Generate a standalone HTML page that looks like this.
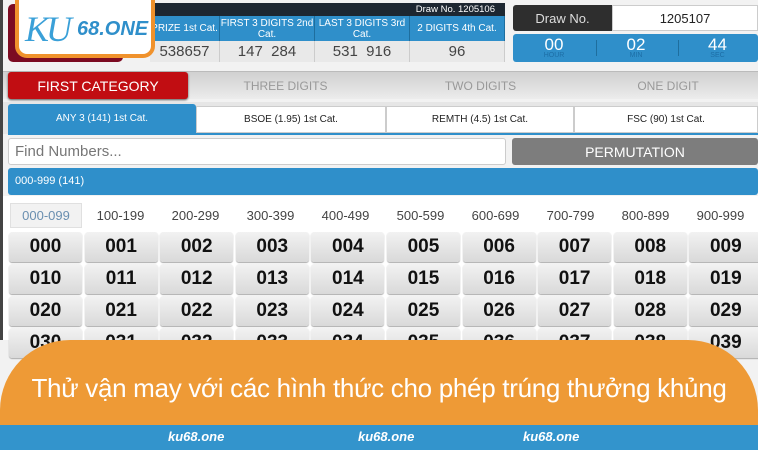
<!DOCTYPE html>
<html><head><meta charset="utf-8"><style>
*{margin:0;padding:0;box-sizing:border-box}
body{width:758px;height:450px;overflow:hidden;background:#f2f2f2;font-family:"Liberation Sans",sans-serif;position:relative}
.a{position:absolute}
.c{display:flex;align-items:center;justify-content:center;text-align:center}
.th{background:#2f8fca;color:#fff;font-size:10px;line-height:11px;border-right:1px solid #1e6e9e}
.td{background:#e9e9e9;color:#444;font-size:15px;border-right:1px solid #ccc}
.num{background:linear-gradient(#f2f2f2,#d9d9d9);border-radius:3px;color:#111;font-size:19px;font-weight:bold;box-shadow:0 1px 1px #aaa}
.rg{font-size:13px;color:#444}
.st{background:#fff;color:#222;font-size:10px;border:1px solid #ccc}
</style></head><body>
<div class="a" style="left:0;top:0;width:3px;height:340px;background:#444"></div>
<div class="a" style="left:8px;top:4px;width:115px;height:58px;background:#7c0b22;border-radius:5px"></div>
<div class="a" style="left:150px;top:3px;width:355px;height:13px;background:#1d2731;color:#fff;font-size:9.5px;text-align:right;padding-right:10px;line-height:13px">Draw No. 1205106</div>
<div class="a th c" style="left:150px;top:16px;width:70px;height:25px">PRIZE 1st Cat.</div>
<div class="a th c" style="left:220px;top:16px;width:95px;height:25px">FIRST 3 DIGITS 2nd<br>Cat.</div>
<div class="a th c" style="left:315px;top:16px;width:95px;height:25px">LAST 3 DIGITS 3rd<br>Cat.</div>
<div class="a th c" style="left:410px;top:16px;width:95px;height:25px">2 DIGITS 4th Cat.</div>
<div class="a td c" style="left:150px;top:41px;width:70px;height:21px">538657</div>
<div class="a td c" style="left:220px;top:41px;width:95px;height:21px">147&nbsp;&nbsp;284</div>
<div class="a td c" style="left:315px;top:41px;width:95px;height:21px">531&nbsp;&nbsp;916</div>
<div class="a td c" style="left:410px;top:41px;width:95px;height:21px">96</div>
<div class="a" style="left:15px;top:-6px;width:140px;height:64px;background:#fff;border:4px solid #f0922c;border-radius:0 0 12px 12px;overflow:hidden">
<div class="a" style="left:6px;top:10px;font-size:36px;font-style:italic;color:#3aa0d8;font-family:'Liberation Serif',serif;letter-spacing:-3px">KU</div>
<div class="a" style="left:58px;top:20px;font-size:20px;font-style:italic;font-weight:bold;color:#2f8fca">68.ONE</div>
</div>
<div class="a c" style="left:513px;top:5px;width:99px;height:26px;background:#2e2e2e;color:#ddd;font-size:13px;border-radius:3px 0 0 3px">Draw No.</div>
<div class="a c" style="left:612px;top:5px;width:146px;height:26px;background:#fff;color:#222;font-size:13px;border:1px solid #ccc">1205107</div>
<div class="a" style="left:513px;top:34px;width:245px;height:28px;background:#2f8fca;border-radius:3px"></div>
<div class="a" style="left:513px;top:35px;width:82px;text-align:center;color:#fff;font-size:17px">00<div style="font-size:7px;color:#1d6ea6;margin-top:-3px">HOUR</div></div>
<div class="a" style="left:595px;top:35px;width:82px;text-align:center;color:#fff;font-size:17px">02<div style="font-size:7px;color:#1d6ea6;margin-top:-3px">MIN</div></div>
<div class="a" style="left:677px;top:35px;width:81px;text-align:center;color:#fff;font-size:17px">44<div style="font-size:7px;color:#1d6ea6;margin-top:-3px">SEC</div></div>
<div class="a" style="left:596px;top:40px;width:1px;height:16px;background:#1e6e9e"></div>
<div class="a" style="left:678px;top:40px;width:1px;height:16px;background:#1e6e9e"></div>
<div class="a" style="left:3px;top:71px;width:755px;height:28px;background:linear-gradient(#d0d0d0,#ececec);border-top:1px solid #bbb"></div>
<div class="a c" style="left:8px;top:72px;width:180px;height:27px;background:#c10d12;color:#fff;font-size:14px;border-radius:3px;box-shadow:0 1px 2px #555">FIRST CATEGORY</div>
<div class="a c" style="left:188px;top:74px;width:195px;height:24px;color:#999;font-size:12px">THREE DIGITS</div>
<div class="a c" style="left:383px;top:74px;width:195px;height:24px;color:#999;font-size:12px">TWO DIGITS</div>
<div class="a c" style="left:578px;top:74px;width:180px;height:24px;color:#999;font-size:12px">ONE DIGIT</div>
<div class="a" style="left:3px;top:102px;width:755px;height:32px;background:#e6e6e6"></div>
<div class="a c" style="left:8px;top:104px;width:188px;height:29px;background:#2f8fca;color:#fff;font-size:10px;border-radius:3px 3px 0 0">ANY 3 (141) 1st Cat.</div>
<div class="a st c" style="left:196px;top:106px;width:190px;height:27px">BSOE (1.95) 1st Cat.</div>
<div class="a st c" style="left:386px;top:106px;width:188px;height:27px">REMTH (4.5) 1st Cat.</div>
<div class="a st c" style="left:574px;top:106px;width:184px;height:27px">FSC (90) 1st Cat.</div>
<div class="a" style="left:8px;top:133px;width:750px;height:2px;background:#2f8fca"></div>
<div class="a" style="left:8px;top:138px;width:498px;height:27px;background:#fff;border:1px solid #ccc;border-radius:3px;color:#777;font-size:15px;padding:4px 6px">Find Numbers...</div>
<div class="a c" style="left:512px;top:138px;width:246px;height:27px;background:#7d7d7d;color:#fff;font-size:14px;border-radius:3px">PERMUTATION</div>
<div class="a" style="left:8px;top:168px;width:750px;height:27px;background:#2f8fca;color:#fff;font-size:11px;padding:7px 7px;border-radius:3px">000-999 (141)</div>
<div class="a" style="left:3px;top:196px;width:755px;height:144px;background:#fff"></div>
<div class="a c rg" style="left:10px;top:203px;width:72px;height:25px;background:#f2f2f2;border:1px solid #e0e0e0;color:#6a8fb0">000-099</div>
<div class="a c rg" style="left:83px;top:203px;width:75px;height:25px">100-199</div>
<div class="a c rg" style="left:158px;top:203px;width:75px;height:25px">200-299</div>
<div class="a c rg" style="left:233px;top:203px;width:75px;height:25px">300-399</div>
<div class="a c rg" style="left:308px;top:203px;width:75px;height:25px">400-499</div>
<div class="a c rg" style="left:383px;top:203px;width:75px;height:25px">500-599</div>
<div class="a c rg" style="left:458px;top:203px;width:75px;height:25px">600-699</div>
<div class="a c rg" style="left:533px;top:203px;width:75px;height:25px">700-799</div>
<div class="a c rg" style="left:608px;top:203px;width:75px;height:25px">800-899</div>
<div class="a c rg" style="left:683px;top:203px;width:75px;height:25px">900-999</div>
<div class="a" style="left:9px;top:232px;width:749px;display:grid;grid-template-columns:repeat(10,73px);column-gap:2.6px;row-gap:2px;grid-auto-rows:30px">
<div class="num c">000</div><div class="num c">001</div><div class="num c">002</div><div class="num c">003</div><div class="num c">004</div><div class="num c">005</div><div class="num c">006</div><div class="num c">007</div><div class="num c">008</div><div class="num c">009</div>
<div class="num c">010</div><div class="num c">011</div><div class="num c">012</div><div class="num c">013</div><div class="num c">014</div><div class="num c">015</div><div class="num c">016</div><div class="num c">017</div><div class="num c">018</div><div class="num c">019</div>
<div class="num c">020</div><div class="num c">021</div><div class="num c">022</div><div class="num c">023</div><div class="num c">024</div><div class="num c">025</div><div class="num c">026</div><div class="num c">027</div><div class="num c">028</div><div class="num c">029</div>
<div class="num c">030</div><div class="num c">031</div><div class="num c">032</div><div class="num c">033</div><div class="num c">034</div><div class="num c">035</div><div class="num c">036</div><div class="num c">037</div><div class="num c">038</div><div class="num c">039</div>
</div>
<div class="a c" style="left:0;top:340px;width:758px;height:90px;background:#ee9a36;border-radius:70px 70px 0 0;color:#fff;font-size:26px;padding-top:6px;letter-spacing:-0.3px">Thử vận may với các hình thức cho phép trúng thưởng khủng</div>
<div class="a" style="left:0;top:425px;width:758px;height:25px;background:#3394cc"></div>
<div class="a" style="left:168px;top:429px;color:#fff;font-size:13px;font-weight:bold;font-style:italic">ku68.one</div>
<div class="a" style="left:358px;top:429px;color:#fff;font-size:13px;font-weight:bold;font-style:italic">ku68.one</div>
<div class="a" style="left:523px;top:429px;color:#fff;font-size:13px;font-weight:bold;font-style:italic">ku68.one</div>
</body></html>
